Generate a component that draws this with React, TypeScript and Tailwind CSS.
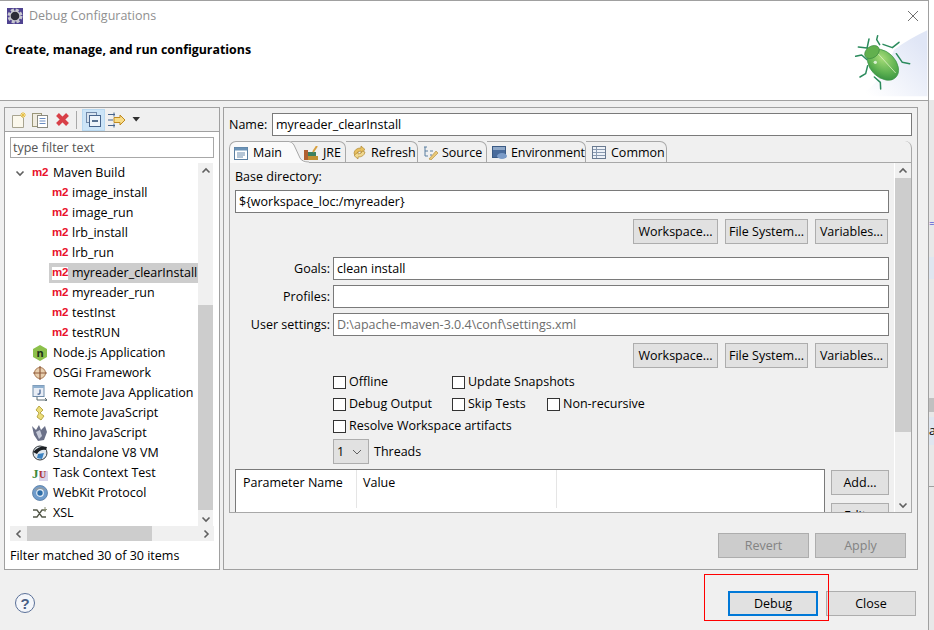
import * as React from 'react'

const font = "font-['Open_Sans','Liberation_Sans',sans-serif]"

function M2({ selected }: { selected?: boolean }) {
  return (
    <span
      className={`inline-flex w-[16px] h-[13px] items-center justify-center font-['Liberation_Sans',sans-serif] text-[11.5px] leading-none font-bold tracking-[-0.4px] text-[#e8102a] shrink-0 ${selected ? 'bg-white' : ''}`}
    >
      m2
    </span>
  )
}

function Icon({ children }: { children: React.ReactNode }) {
  return (
    <svg width="16" height="16" viewBox="0 0 16 16" className="shrink-0">
      {children}
    </svg>
  )
}

const treeIcons: Record<string, React.ReactNode> = {
  node: (
    <Icon>
      <path d="M8 0 L15 4 V12 L8 16 L1 12 V4 Z" fill="#8cc04b" />
      <text x="8" y="12" textAnchor="middle" fontSize="11" fontWeight="700" fill="#20301a">
        n
      </text>
    </Icon>
  ),
  osgi: (
    <Icon>
      <circle cx="8" cy="8" r="5.5" fill="#e8cfae" stroke="#a87852" />
      <path d="M8 1 V15 M1 8 H15" stroke="#905c3c" strokeWidth="1.2" />
    </Icon>
  ),
  remoteJava: (
    <Icon>
      <rect x="1" y="0.5" width="11" height="11" fill="#e8edf5" stroke="#6f8ba8" />
      <rect x="1" y="0.5" width="11" height="2.5" fill="#8fb0cf" />
      <path d="M8 4.5 V8 Q8 9.5 5.5 9" stroke="#3a5a8c" strokeWidth="1.2" fill="none" />
      <path d="M5 12 V15 H15 M13 13 L15 15 L13 16" stroke="#5a6a70" fill="none" />
    </Icon>
  ),
  remoteJs: (
    <Icon>
      <path d="M7 1 L11 5 L8 8 L12 11 L9 15 L5 12 L7 8 L4 5 Z" fill="#ecdc78" stroke="#b8a848" />
    </Icon>
  ),
  rhino: (
    <Icon>
      <path d="M0 1 L4 5 L7 0 L9 5 L13 1 L15 7 L12 15 L6 16 L2 10 Z" fill="#6a7088" />
      <path d="M4 7 L8 5 L10 11 L7 14 Z" fill="#c6cad8" />
    </Icon>
  ),
  v8: (
    <Icon>
      <circle cx="8" cy="8" r="7" fill="#dfe7ee" stroke="#33383c" />
      <path d="M1 7 Q8 0 15 2 L14 5 Q8 4 5 9 Z" fill="#1c2024" />
      <path d="M6 9 L12 8 L10 14 L5 13 Z" fill="#3c82c0" />
    </Icon>
  ),
  junit: (
    <Icon>
      <rect x="7" y="6" width="9" height="10" fill="#d8d4ea" />
      <text x="0" y="13" fontSize="13" fontWeight="700" fontFamily="Liberation Serif" fill="#3d8a3a">
        J
      </text>
      <text x="7" y="13" fontSize="10" fontWeight="700" fontFamily="Liberation Serif" fill="#b03030">
        U
      </text>
    </Icon>
  ),
  webkit: (
    <Icon>
      <circle cx="8" cy="8" r="7.5" fill="#6f9ccc" stroke="#5578a0" strokeWidth="0.8" />
      <path d="M2 5 Q8 -1 14 5 L8 6 Z" fill="#8c9aa8" />
      <circle cx="8" cy="8" r="3.3" fill="#2f6ea8" stroke="#e6eef6" strokeWidth="1.2" />
    </Icon>
  ),
  xsl: (
    <Icon>
      <path d="M1 5 H5 L10 12 H14 M1 12 H5 L10 5 H14" stroke="#54584a" strokeWidth="1.3" fill="none" />
      <path d="M13 2 V7 M11 4.5 H15" stroke="#8a8e74" />
    </Icon>
  ),
}

const mavenChildren = ['image_install', 'image_run', 'lrb_install', 'lrb_run', 'myreader_clearInstall', 'myreader_run', 'testInst', 'testRUN']

const topLevel = [
  ['node', 'Node.js Application'],
  ['osgi', 'OSGi Framework'],
  ['remoteJava', 'Remote Java Application'],
  ['remoteJs', 'Remote JavaScript'],
  ['rhino', 'Rhino JavaScript'],
  ['v8', 'Standalone V8 VM'],
  ['junit', 'Task Context Test'],
  ['webkit', 'WebKit Protocol'],
  ['xsl', 'XSL'],
]

function Chevron({ dir }: { dir: 'up' | 'down' | 'left' | 'right' }) {
  const d = {
    up: 'M1.5 6.5 L5 3 L8.5 6.5',
    down: 'M1.5 3.5 L5 7 L8.5 3.5',
    left: 'M6.5 1.5 L3 5 L6.5 8.5',
    right: 'M3.5 1.5 L7 5 L3.5 8.5',
  }[dir]
  return (
    <svg width="10" height="10" viewBox="0 0 10 10">
      <path d={d} fill="none" stroke="#606060" strokeWidth="1.6" />
    </svg>
  )
}

function Btn({ label, className = '', disabled }: { label: string; className?: string; disabled?: boolean }) {
  return (
    <div
      className={`flex items-center justify-center border border-[#adadad] shrink-0 ${
        disabled ? 'bg-[#cccccc] text-[#838383]' : 'bg-[#e1e1e1] text-black'
      } ${className}`}
    >
      {label}
    </div>
  )
}

function Input({ value, className = '', muted }: { value?: string; className?: string; muted?: boolean }) {
  return (
    <div
      className={`h-[23px] bg-white border border-[#7a7a7a] flex items-center px-[3px] ${muted ? 'text-[#6d6d6d]' : ''} ${className}`}
    >
      {value}
    </div>
  )
}

function Check({ label, className = '' }: { label: string; className?: string }) {
  return (
    <div className={`flex items-center gap-[3px] ${className}`}>
      <span className="w-[13px] h-[13px] border border-[#333333] bg-white shrink-0" />
      <span>{label}</span>
    </div>
  )
}

function BrowseButtons() {
  return (
    <div className="flex justify-end gap-[7px] pr-[1px]">
      <Btn label="Workspace..." className="w-[85px] h-[25px]" />
      <Btn label="File System..." className="w-[83px] h-[25px]" />
      <Btn label="Variables..." className="w-[73px] h-[25px]" />
    </div>
  )
}

function FormRow({ label, value, muted }: { label: string; value?: string; muted?: boolean }) {
  return (
    <div className="flex items-center">
      <span className="w-[98px] pr-[3px] text-right">{label}</span>
      <Input value={value} muted={muted} className="flex-1" />
    </div>
  )
}

function Tab({ label, icon, className }: { label: string; icon: React.ReactNode; className: string }) {
  return (
    <div className={`relative h-[22px] flex items-center gap-[4px] pt-[1px] whitespace-nowrap overflow-hidden border-t border-r border-b border-[#a8a8a8] rounded-tr-[7px] ${className}`}>
      {icon}
      <span>{label}</span>
    </div>
  )
}

function Beetle() {
  return (
    <svg width="84" height="70" viewBox="195 85 252 210">
      <defs>
        <radialGradient id="shell" cx="0.35" cy="0.35" r="0.8">
          <stop offset="0" stopColor="#a6dc78" />
          <stop offset="0.6" stopColor="#5cb050" />
          <stop offset="1" stopColor="#2f8a3c" />
        </radialGradient>
        <linearGradient id="glow" x1="0.2" y1="1" x2="1" y2="0.3">
          <stop offset="0" stopColor="#ffffff" />
          <stop offset="1" stopColor="#e0e6f6" />
        </linearGradient>
      </defs>
      <path d="M225 290 Q300 270 345 150 Q395 115 445 92 V290 Z" fill="url(#glow)" />
      <g fill="none" stroke="#2a8a5c" strokeWidth="4.5" strokeLinecap="round" strokeLinejoin="round">
        <path d="M264 146 L270 118 M238 142 L264 145" />
        <path d="M302 135 L293 120 L296 108 M312 134 L340 144 L360 128" />
        <path d="M352 162 L370 188 L392 192" />
        <path d="M264 180 L248 166 L230 170" />
        <path d="M266 198 L260 222 L243 232" />
        <path d="M286 232 L304 248 L305 268" />
      </g>
      <ellipse cx="312" cy="195" rx="54" ry="38" transform="rotate(45 312 195)" fill="url(#shell)" stroke="#3a9448" strokeWidth="2" />
      <ellipse cx="279" cy="157" rx="24" ry="17" transform="rotate(-35 279 157)" fill="#62b04e" stroke="#3a8a40" strokeWidth="2" />
      <path d="M298 163 L350 220" stroke="#d8f0c0" strokeWidth="2.5" />
      <circle cx="289" cy="188" r="5" fill="#d8f0d0" />
    </svg>
  )
}

export default function App() {
  return (
    <div className={`w-[934px] h-[630px] overflow-hidden flex bg-[#e8e8e8] text-[12.5px] leading-[16px] text-black ${font}`}>
      <div className="relative w-[929px] h-full shrink-0 flex flex-col bg-[#f0f0f0] border-t border-r border-[#a0a0a0]">
        <header className="relative h-[99px] bg-white border-b border-[#a0a0a0] shrink-0 box-content">
          <div className="flex items-center gap-[6px] pl-[7px] h-[29px]">
            <svg width="16" height="16" viewBox="0 0 16 16">
              <rect width="16" height="16" fill="#4f4290" />
              <circle cx="8" cy="8" r="6" fill="none" stroke="#c8c8d0" strokeWidth="3" strokeDasharray="3 1.7" />
              <circle cx="8" cy="8" r="5.5" fill="#c8c8d0" />
              <circle cx="8" cy="8" r="4.3" fill="#2c2c38" />
            </svg>
            <span className="text-[#909090]">Debug Configurations</span>
          </div>
          <div className="pl-[5px] pt-[12px] font-bold text-[12.4px]">Create, manage, and run configurations</div>
          <svg className="absolute left-[907px] top-[9px]" width="12" height="12" viewBox="0 0 12 12">
            <path d="M1 1 L11 11 M11 1 L1 11" stroke="#707070" />
          </svg>
          <div className="absolute right-0 bottom-[2px] flex">
            <Beetle />
          </div>
        </header>

        <div className="flex gap-[3px] pl-[4px] pt-[6px]">
          <aside className="w-[216px] h-[463px] border border-[#a0a0a0] bg-white flex flex-col shrink-0">
            <div className="h-[24px] bg-[#f0f0f0] border-b border-[#a0a0a0] flex items-center pl-[6px] shrink-0">
              <svg width="16" height="16" viewBox="0 0 16 16">
                <path d="M1.5 3.5 H10 L12.5 6 V15.5 H1.5 Z" fill="#fbf8ec" stroke="#a8a490" />
                <path d="M12 0 V6 M9 3 H15 M10 1 L14 5 M14 1 L10 5" stroke="#e8c040" />
              </svg>
              <svg className="ml-[5px]" width="17" height="16" viewBox="0 0 17 16">
                <rect x="0.5" y="1.5" width="9" height="13" fill="#f0ece0" stroke="#9a9678" />
                <rect x="5.5" y="3.5" width="10" height="12" fill="#fff" stroke="#8a8a80" />
                <path d="M7.5 6.5 H13.5 M7.5 9 H13.5 M7.5 11.5 H13.5" stroke="#6a8cc0" />
              </svg>
              <svg className="ml-[6px]" width="15" height="15" viewBox="0 0 15 15">
                <path d="M2.5 2.5 L12.5 12.5 M12.5 2.5 L2.5 12.5" stroke="#d84048" strokeWidth="4" />
              </svg>
              <span className="w-px h-[18px] bg-[#a8a8a8] ml-[6px]" />
              <span className="ml-[5px] w-[23px] h-[22px] bg-[#cce4f7] border border-[#b8d8f0] flex items-center justify-center">
                <svg width="15" height="15" viewBox="0 0 15 15">
                  <rect x="0.5" y="0.5" width="10" height="10" fill="#d8e4f0" stroke="#7088a8" />
                  <rect x="3.5" y="3.5" width="11" height="11" fill="#eef4fa" stroke="#47648c" />
                  <path d="M6 9 H12" stroke="#26466e" strokeWidth="1.5" />
                </svg>
              </span>
              <svg className="ml-[3px]" width="18" height="16" viewBox="0 0 18 16">
                <path d="M0 2.5 H7 M0 8 H5 M0 13.5 H7 M6 0.5 V4.5 M6 11.5 V15.5" stroke="#47648c" />
                <path d="M6 5.5 H12 V3 L17 8 L12 13 V10.5 H6 Z" fill="#f8dc88" stroke="#c08a20" />
              </svg>
              <svg className="ml-[6px]" width="9" height="5" viewBox="0 0 9 5">
                <path d="M0.5 0 H8 L4.2 4.5 Z" fill="#303030" />
              </svg>
            </div>

            <div className="pl-[5px] pr-[5px] pt-[5px] shrink-0">
              <div className="h-[21px] border border-[#a8a8a8] flex items-center px-[2px] text-[#555555]">type filter text</div>
            </div>

            <div className="flex h-[363px] mt-[5px] mx-[5px] shrink-0">
              <div className="w-[188px] overflow-hidden whitespace-nowrap">
                <div className="flex items-center h-[20px] pl-[5px]">
                  <span className="w-[17px] flex shrink-0">
                    <Chevron dir="down" />
                  </span>
                  <M2 />
                  <span className="ml-[5px]">Maven Build</span>
                </div>
                {mavenChildren.map((name) => {
                  const selected = name === 'myreader_clearInstall'
                  return (
                    <div key={name} className={`flex items-center h-[20px] ml-[39px] pl-[3px] ${selected ? 'bg-[#cdcdcd]' : ''}`}>
                      <M2 selected={selected} />
                      <span className="ml-[4px]">{name}</span>
                    </div>
                  )
                })}
                {topLevel.map(([icon, name]) => (
                  <div key={name} className="flex items-center h-[20px] pl-[22px]">
                    {treeIcons[icon]}
                    <span className="ml-[5px]">{name}</span>
                  </div>
                ))}
              </div>
              <div className="w-[15px] bg-[#f0f0f0] flex flex-col shrink-0">
                <div className="h-[15px] flex items-center justify-center shrink-0">
                  <Chevron dir="up" />
                </div>
                <div className="flex-1 flex flex-col justify-end">
                  <div className="h-[205px] bg-[#cdcdcd]" />
                </div>
                <div className="h-[15px] mt-[1px] flex items-center justify-center shrink-0">
                  <Chevron dir="down" />
                </div>
              </div>
            </div>

            <div className="h-[15px] mx-[5px] bg-[#f0f0f0] flex items-center shrink-0">
              <span className="w-[17px] flex justify-center">
                <Chevron dir="left" />
              </span>
              <span className="w-[125px] h-full bg-[#cdcdcd]" />
              <span className="ml-auto w-[17px] flex justify-center">
                <Chevron dir="right" />
              </span>
            </div>
            <div className="pl-[5px] pt-[7px]">Filter matched 30 of 30 items</div>
          </aside>

          <main className="w-[695px] h-[463px] border border-[#a0a0a0] flex flex-col px-[5px] shrink-0">
            <div className="flex items-center h-[23px] mt-[5px] shrink-0">
              <span className="w-[43px]">Name:</span>
              <Input value="myreader_clearInstall" className="w-[640px]" />
            </div>
            <div className="mt-[5px] w-[683px] h-[372px] flex flex-col shrink-0">
              <div className="flex h-[22px] shrink-0">
                <div className="relative z-10 w-[60px] h-[22px] flex items-center gap-[4px] pl-[4px] pt-[1px] border-t border-l border-[#a8a8a8] rounded-tl-[7px] bg-[#fafafa]">
                  <svg width="15" height="15" viewBox="0 0 15 15">
                    <rect x="0.5" y="1.5" width="13" height="12" fill="#fff" stroke="#5a7ea0" />
                    <rect x="0.5" y="1.5" width="13" height="3" fill="#6c94b8" />
                    <path d="M3 7 H11 M3 9 H11 M3 11 H9" stroke="#6c8cac" />
                  </svg>
                  <span>Main</span>
                  <svg className="absolute -right-[20px] top-[-1px]" width="20" height="22" viewBox="0 0 20 22">
                    <path d="M0 0 Q3 0 5 4 L11 17 Q13 21 20 21 V22 H0 Z" fill="#fafafa" />
                    <path d="M0 0.5 Q3 0.5 5 4 L11 17 Q13 21 20 21" fill="none" stroke="#a8a8a8" />
                  </svg>
                </div>
                <Tab
                  label="JRE"
                  className="w-[57px] pl-[15px]"
                  icon={
                    <svg className="shrink-0" width="15" height="14" viewBox="0 0 15 14">
                      <rect x="0" y="4" width="4" height="10" fill="#b06030" />
                      <rect x="4" y="6" width="8" height="4" fill="#3c8060" />
                      <rect x="4" y="10" width="10" height="4" fill="#c09030" />
                      <path d="M9 6 L13 0" stroke="#d8a040" strokeWidth="2" />
                    </svg>
                  }
                />
                <Tab
                  label="Refresh"
                  className="w-[72px] pl-[6px]"
                  icon={
                    <svg className="shrink-0" width="15" height="15" viewBox="0 0 15 15">
                      <path d="M2 8 Q3 3 9 3 L9 1 L13 4.5 L9 8 L9 6 Q5 6 5 9 L3 11 Z" fill="#e8c060" stroke="#b08830" strokeWidth="0.7" />
                      <path d="M13 7 Q12 12 6 12 L6 14 L2 10.5 L6 7 L6 9 Q10 9 10 6 Z" fill="#f0d890" stroke="#b08830" strokeWidth="0.7" />
                    </svg>
                  }
                />
                <Tab
                  label="Source"
                  className="w-[69px] pl-[5px]"
                  icon={
                    <svg className="shrink-0" width="15" height="15" viewBox="0 0 15 15">
                      <path d="M1 2 H4 M2 2 V11 H5 M2 6 H5" stroke="#5a7ea0" fill="none" />
                      <path d="M7 6 H10 M7 10 H9" stroke="#5a7ea0" />
                      <path d="M6 14 L13 6 L15 8 L8 15 Z" fill="#e8c878" stroke="#b08830" strokeWidth="0.6" />
                    </svg>
                  }
                />
                <Tab
                  label="Environment"
                  className="w-[99px] pl-[5px] tracking-[-0.1px]"
                  icon={
                    <svg className="shrink-0" width="15" height="15" viewBox="0 0 15 15">
                      <rect x="0.5" y="1.5" width="13" height="11" fill="#4a6c9c" stroke="#3a5a84" />
                      <rect x="1" y="2" width="12" height="3" fill="#8fa8c8" />
                      <ellipse cx="10" cy="11" rx="5" ry="3" fill="#7c9cc8" />
                    </svg>
                  }
                />
                <Tab
                  label="Common"
                  className="w-[81px] pl-[6px]"
                  icon={
                    <svg className="shrink-0" width="15" height="15" viewBox="0 0 15 15">
                      <rect x="0.5" y="1.5" width="13" height="12" fill="#eef2f8" stroke="#6a7a90" />
                      <path d="M1 4.5 H13 M1 7.5 H13 M1 10.5 H13 M4.5 2 V13" stroke="#8a9ab0" />
                    </svg>
                  }
                />
                <div className="flex-1 border-r border-b border-[#a8a8a8] rounded-tr-[7px]" />
              </div>
              <div className="flex-1 flex min-h-0 border-l border-r border-b border-[#a8a8a8]">
                <div className="flex-1 overflow-hidden pl-[5px] pr-[5px]">
                  <div className="pt-[6px] h-[27px]">Base directory:</div>
                  <Input value="${workspace_loc:/myreader}" className="w-[654px]" />
                  <div className="mt-[6px] w-[654px]">
                    <BrowseButtons />
                  </div>
                  <div className="mt-[13px] w-[654px] flex flex-col gap-[5px]">
                    <FormRow label="Goals:" value="clean install" />
                    <FormRow label="Profiles:" />
                    <FormRow label="User settings:" value="D:\apache-maven-3.0.4\conf\settings.xml" muted />
                  </div>
                  <div className="mt-[7px] w-[654px]">
                    <BrowseButtons />
                  </div>
                  <div className="ml-[98px] mt-[3px] grid grid-cols-[119px_95px_auto] auto-rows-[22px] items-center w-[400px]">
                    <Check label="Offline" />
                    <Check label="Update Snapshots" className="col-span-2" />
                    <Check label="Debug Output" />
                    <Check label="Skip Tests" />
                    <Check label="Non-recursive" />
                    <Check label="Resolve Workspace artifacts" className="col-span-3" />
                  </div>
                  <div className="ml-[98px] mt-[2px] flex items-center gap-[5px]">
                    <div className="w-[36px] h-[25px] bg-[#e1e1e1] border border-[#adadad] flex items-center justify-between pl-[3px] pr-[6px]">
                      <span>1</span>
                      <svg width="10" height="6" viewBox="0 0 10 6">
                        <path d="M1 1 L5 5 L9 1" fill="none" stroke="#606060" />
                      </svg>
                    </div>
                    <span>Threads</span>
                  </div>
                  <div className="flex gap-[6px] mt-[5px] w-[654px]">
                    <div className="w-[590px] h-[60px] shrink-0 bg-white border border-[#7a7a7a] flex">
                      <div className="w-[121px] h-[38px] border-r border-[#e5e5e5] pl-[7px] pt-[5px]">Parameter Name</div>
                      <div className="w-[200px] h-[38px] border-r border-[#e5e5e5] pl-[6px] pt-[5px]">Value</div>
                    </div>
                    <div className="flex flex-col gap-[8px] flex-1 pt-[1px]">
                      <Btn label="Add..." className="h-[25px]" />
                      <Btn label="Edit..." className="h-[25px]" />
                    </div>
                  </div>
                </div>
                <div className="w-[17px] shrink-0 bg-[#f0f0f0] border-l border-white flex flex-col">
                  <div className="h-[15px] flex items-center justify-center shrink-0">
                    <Chevron dir="up" />
                  </div>
                  <div className="h-[254px] bg-[#cdcdcd] shrink-0" />
                  <div className="mt-auto h-[15px] flex items-center justify-center shrink-0">
                    <Chevron dir="down" />
                  </div>
                </div>
              </div>
            </div>
            <div className="flex justify-end gap-[6px] pt-[20px] pr-[6px]">
              <Btn label="Revert" disabled className="w-[91px] h-[25px]" />
              <Btn label="Apply" disabled className="w-[91px] h-[25px]" />
            </div>
          </main>
        </div>

        <footer className="flex items-center justify-between h-[25px] mt-[21px] pl-[15px] pr-[12px] shrink-0">
          <svg className="mb-[2px]" width="20" height="20" viewBox="0 0 20 20">
            <circle cx="10" cy="10" r="9.5" fill="#f4f6fa" stroke="#5a7098" />
            <text x="10" y="15.5" textAnchor="middle" fontSize="15" fontWeight="700" fontFamily="Liberation Sans" fill="#4a5e84">
              ?
            </text>
          </svg>
          <div className="flex gap-[8px]">
            <Btn label="Debug" className="w-[90px] h-[25px] !border-2 !border-[#0078d7]" />
            <Btn label="Close" className="w-[90px] h-[25px]" />
          </div>
        </footer>

        {/* red annotation on top of the shot */}
        <div className="absolute left-[704px] top-[573px] w-[125px] h-[47px] border border-[#ff0000] pointer-events-none" />
      </div>

      <div className="flex-1 overflow-hidden text-[#000]">
        <div className="h-[100px] bg-white" />
        <div className="h-[118px]" />
        <div className="h-[10px] text-[#2020d0] leading-[10px] text-[10px]">=</div>
        <div className="h-[29px]" />
        <div className="h-[22px] bg-[#dfe6f0]" />
        <div className="h-[119px]" />
        <div className="h-[14px] bg-[#c0c0c0]" />
        <div className="h-[5px]" />
        <div className="h-[28px] bg-[#dfe6f0] leading-[28px]">a</div>
        <div className="h-[42px] border-b border-[#a0a0a0]" />
      </div>
    </div>
  )
}
